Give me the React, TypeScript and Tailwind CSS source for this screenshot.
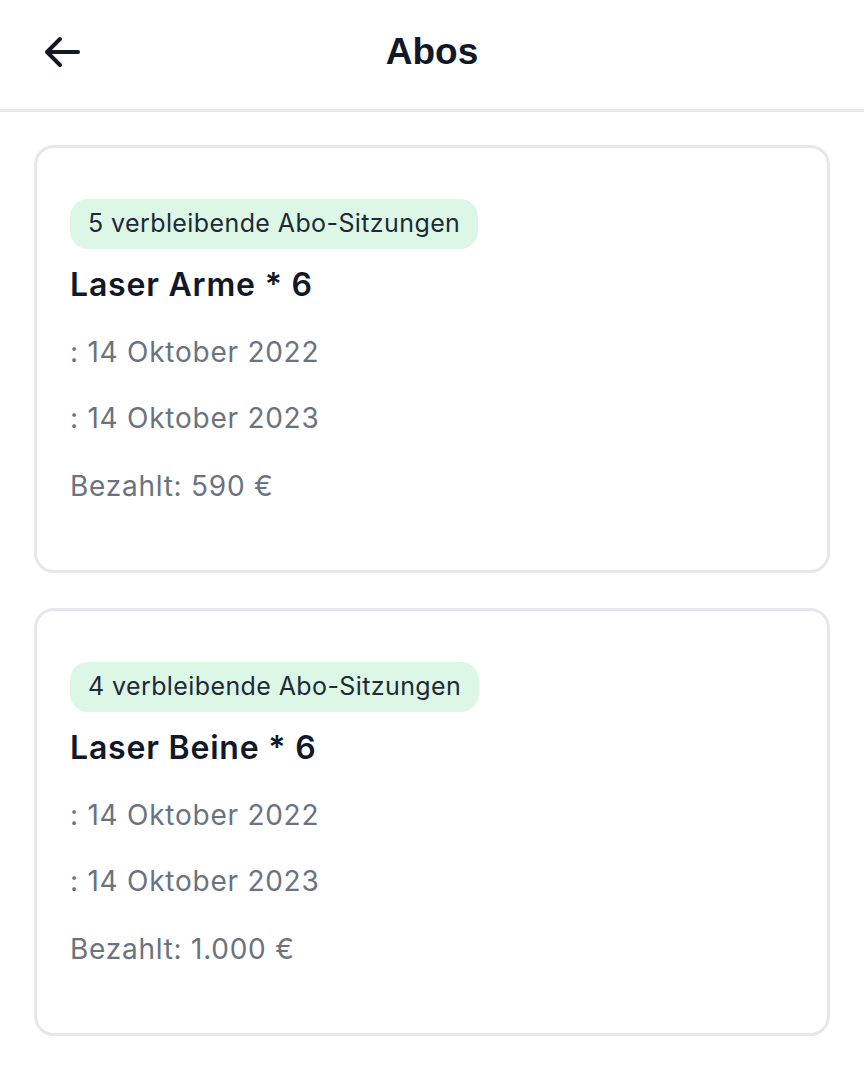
import React from "react";

type Abo = { remaining: number; name: string; start: string; end: string; paid: string };

const abos: Abo[] = [
  { remaining: 5, name: "Laser Arme * 6", start: ": 14 Oktober 2022", end: ": 14 Oktober 2023", paid: "Bezahlt: 590 €" },
  { remaining: 4, name: "Laser Beine * 6", start: ": 14 Oktober 2022", end: ": 14 Oktober 2023", paid: "Bezahlt: 1.000 €" },
];

function AboCard({ abo }: { abo: Abo }) {
  return (
    <div className="rounded-[20px] border-[3px] border-[#e5e7eb] bg-white px-[33px] pt-[51px] pb-[64px]">
      <div className="flex">
        <span className="flex h-[50px] items-center whitespace-nowrap rounded-[18px] bg-[#dcf7e6] px-[18px] text-[25px] tracking-[0.4px] text-[#1f2937]">
          {abo.remaining} verbleibende Abo-Sitzungen
        </span>
      </div>
      <div className="mt-[16px] h-[40px] leading-[40px] text-[32px] font-semibold tracking-[0.8px] text-[#111827]">{abo.name}</div>
      <div className="mt-[27px] h-[40px] leading-[40px] text-[28px] tracking-[0.75px] text-[#6b7280]">{abo.start}</div>
      <div className="mt-[26px] h-[40px] leading-[40px] text-[28px] tracking-[0.75px] text-[#6b7280]">{abo.end}</div>
      <div className="mt-[28px] h-[40px] leading-[40px] text-[28px] tracking-[0.75px] text-[#6b7280]">{abo.paid}</div>
    </div>
  );
}

export default function App() {
  return (
    <div className="min-h-[1076px] w-[864px] bg-white" style={{ fontFamily: "Inter, 'Noto Sans', sans-serif" }}>
      <header className="relative flex h-[112px] items-center justify-center border-b-[3px] border-[#e5e7eb]">
        <button className="absolute left-[44px] top-[36px] flex h-[32px] w-[36px] items-center justify-center">
          <svg width="36" height="32" viewBox="0 0 36 32" fill="none" stroke="#111827" strokeWidth="4" strokeLinecap="round" strokeLinejoin="round">
            <path d="M34 16H4" />
            <path d="M16 3L3 16L16 29" />
          </svg>
        </button>
        <h1 className="mt-[-5px] text-[37px] font-bold text-[#111827]" style={{ fontFamily: "'Liberation Sans', Arial, sans-serif" }}>
          Abos
        </h1>
      </header>
      <main className="flex flex-col gap-[35px] px-[34px] pt-[33px]">
        {abos.map((a) => (
          <AboCard key={a.name} abo={a} />
        ))}
      </main>
    </div>
  );
}
